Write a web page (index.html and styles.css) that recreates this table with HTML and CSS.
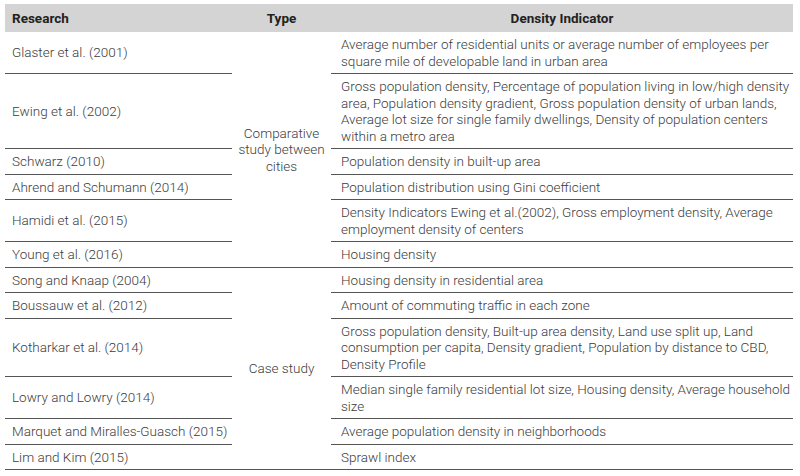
FILE: index.html
```html
<!DOCTYPE html>
<html>
<head>
<meta charset="utf-8">
<link rel="stylesheet" href="styles.css">
</head>
<body>
<table class="density-table">
  <thead>
    <tr>
      <th class="col-research">Research</th>
      <th class="col-type">Type</th>
      <th class="col-indicator">Density Indicator</th>
    </tr>
  </thead>
  <tbody>
    <tr>
      <td class="research">Glaster et al. (2001)</td>
      <td class="type" rowspan="6">Comparative study between cities</td>
      <td class="indicator">Average number of residential units or average number of employees per square mile of developable land in urban area</td>
    </tr>
    <tr>
      <td class="research">Ewing et al. (2002)</td>
      <td class="indicator">Gross population density, Percentage of population living in low/high density area, Population density gradient, Gross population density of urban lands, Average lot size for single family dwellings, Density of population centers within a metro area</td>
    </tr>
    <tr>
      <td class="research">Schwarz (2010)</td>
      <td class="indicator">Population density in built-up area</td>
    </tr>
    <tr>
      <td class="research">Ahrend and Schumann (2014)</td>
      <td class="indicator">Population distribution using Gini coefficient</td>
    </tr>
    <tr>
      <td class="research">Hamidi et al. (2015)</td>
      <td class="indicator">Density Indicators Ewing et al.(2002), Gross employment density, Average employment density of centers</td>
    </tr>
    <tr>
      <td class="research">Young et al. (2016)</td>
      <td class="indicator">Housing density</td>
    </tr>
    <tr>
      <td class="research">Song and Knaap (2004)</td>
      <td class="type" rowspan="7">Case study</td>
      <td class="indicator">Housing density in residential area</td>
    </tr>
    <tr>
      <td class="research">Boussauw et al. (2012)</td>
      <td class="indicator">Amount of commuting traffic in each zone</td>
    </tr>
    <tr>
      <td class="research">Kotharkar et al. (2014)</td>
      <td class="indicator">Gross population density, Built-up area density, Land use split up, Land consumption per capita, Density gradient, Population by distance to CBD, Density Profile</td>
    </tr>
    <tr>
      <td class="research">Lowry and Lowry (2014)</td>
      <td class="indicator">Median single family residential lot size, Housing density, Average household size</td>
    </tr>
    <tr>
      <td class="research">Marquet and Miralles-Guasch (2015)</td>
      <td class="indicator">Average population density in neighborhoods</td>
    </tr>
    <tr>
      <td class="research">Lim and Kim (2015)</td>
      <td class="indicator">Sprawl index</td>
    </tr>
  </tbody>
</table>
</body>
</html>
```

FILE: styles.css
```css
html, body {
  background: #ffffff;
}
body {
  margin: 4px 7px 0 5px;
  font-family: Roboto, "Liberation Sans", sans-serif;
  font-size: 13.5px;
  color: #3c3c3c;
}
.density-table {
  width: 788px;
  border-collapse: collapse;
  table-layout: fixed;
}
.density-table th,
.density-table td {
  box-sizing: border-box;
}
.col-research { width: 227px; }
.col-type { width: 99px; }
.col-indicator { width: 462px; }
.density-table th {
  background: #d4d4d4;
  color: #222222;
  font-weight: 700;
  height: 28px;
  padding: 0 7px;
  line-height: 16px;
  vertical-align: middle;
}
.density-table th.col-research { text-align: left; }
.density-table th.col-type,
.density-table th.col-indicator { text-align: center; }
.density-table td {
  font-weight: 300;
  line-height: 16.5px;
  padding: 4px 2px 4px 7px;
  vertical-align: middle;
  border-bottom: 1px solid #555555;
}
.density-table td.indicator {
  padding-left: 10px;
  padding-right: 2px;
}
.density-table td.type {
  text-align: center;
  padding: 0 5px;
}
```
